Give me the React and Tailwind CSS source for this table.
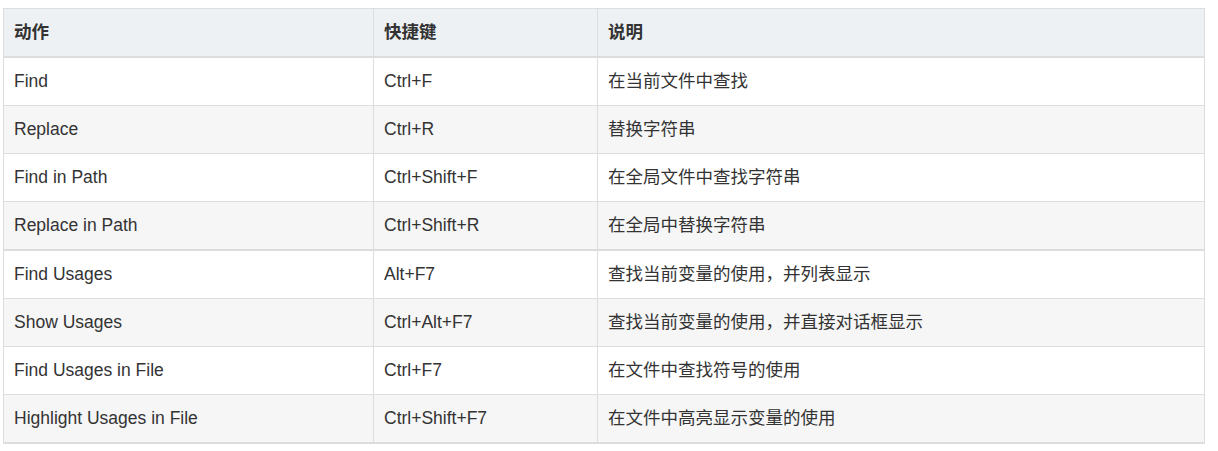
const rows = [
  ["Find", "Ctrl+F", "在当前文件中查找"],
  ["Replace", "Ctrl+R", "替换字符串"],
  ["Find in Path", "Ctrl+Shift+F", "在全局文件中查找字符串"],
  ["Replace in Path", "Ctrl+Shift+R", "在全局中替换字符串"],
  ["Find Usages", "Alt+F7", "查找当前变量的使用，并列表显示"],
  ["Show Usages", "Ctrl+Alt+F7", "查找当前变量的使用，并直接对话框显示"],
  ["Find Usages in File", "Ctrl+F7", "在文件中查找符号的使用"],
  ["Highlight Usages in File", "Ctrl+Shift+F7", "在文件中高亮显示变量的使用"],
];

function Row({ cells, className }) {
  return (
    <div className={`grid grid-cols-[370px_224px_1fr] ${className}`}>
      <div className="flex items-center border-r border-[#dddddd] px-[10px]">{cells[0]}</div>
      <div className="flex items-center border-r border-[#dddddd] px-[10px]">{cells[1]}</div>
      <div className="flex items-center px-[10px]">{cells[2]}</div>
    </div>
  );
}

export default function App() {
  return (
    <div
      className="w-[1218px] h-[451px] bg-white pt-[8px] text-[17.5px] text-[#333333]"
      style={{ fontFamily: '"Liberation Sans", Arial, "Noto Sans CJK SC", sans-serif' }}
    >
      <div className="ml-[3px] w-[1202px] border-t border-x border-[#dddddd]">
        {/* 表头 */}
        <Row
          cells={["动作", "快捷键", "说明"]}
          className="h-[49px] border-b-2 border-[#dddddd] bg-[#eef1f4] font-bold"
        />
        {rows.map((r, i) => {
          const thick = i === 3 || i === rows.length - 1;
          return (
            <Row
              key={r[0]}
              cells={r}
              className={`${thick ? "h-[49px] border-b-2" : "h-[48px] border-b"} border-[#dddddd] ${
                i % 2 === 1 ? "bg-[#f6f6f6]" : "bg-white"
              }`}
            />
          );
        })}
      </div>
    </div>
  );
}
